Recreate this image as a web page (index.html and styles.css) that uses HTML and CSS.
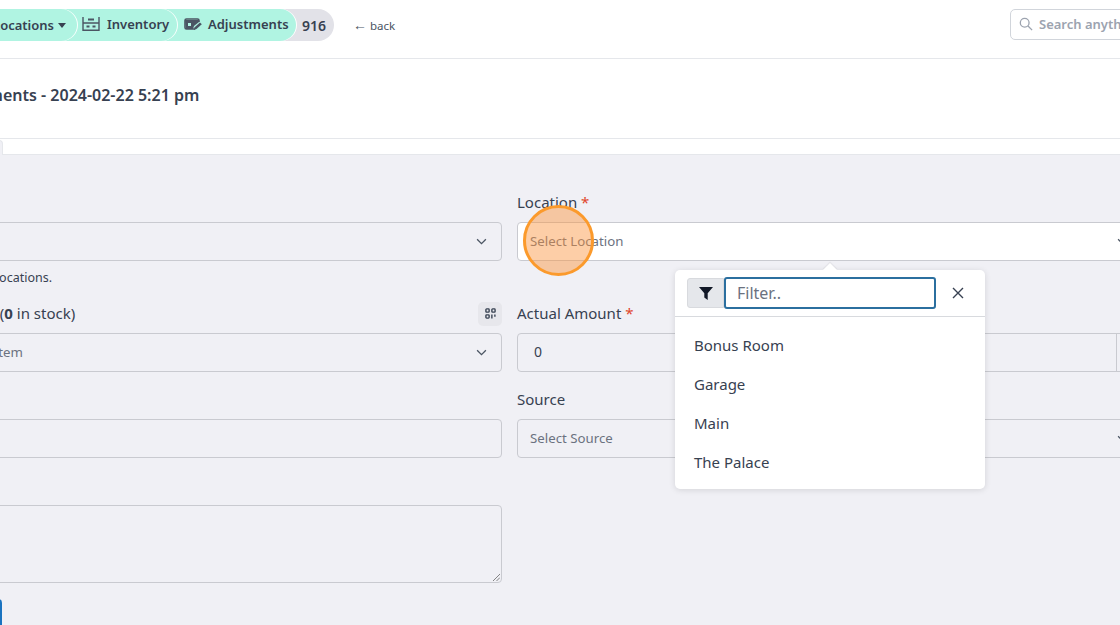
FILE: index.html
```html
<!DOCTYPE html>
<html lang="en">
<head>
    <meta charset="UTF-8">
    <meta name="viewport" content="width=device-width, initial-scale=1.0">
    <title>Inventory Adjustments</title>
    <link rel="stylesheet" href="styles.css">
</head>
<body>
    <div class="topbar">
        <div class="crumbs">
            <div class="pill pill-first">Locations <span class="caret"></span></div>
            <div class="pill pill-mid">
                <svg class="pill-icon" viewBox="0 0 18 14" fill="none" stroke="#4b5563" stroke-width="1.4">
                    <path d="M1 0v13.300h16V0M1 6h16"/>
                    <path d="M6 2.500h6" stroke-width="2"/>
                    <path d="M4.500 9.500h3M10.500 9.500h3" stroke-width="2"/>
                </svg>
                Inventory
            </div>
            <div class="pill pill-last">
                <svg class="pill-icon" viewBox="0 0 18 14" fill="none" stroke="#4b5563" stroke-width="1.6">
                    <path d="M11 12H2.500A1.500 1.500 0 0 1 1 10.500v-7A1.500 1.500 0 0 1 2.500 2h11A1.500 1.500 0 0 1 15 3.500V5"/>
                    <path d="M1 3h14v2l-5 4-1 3H2z" fill="#4b5563" stroke="none"/>
                    <path d="M4 6h3v3H4z" fill="#b0f4e2" stroke="none"/>
                    <path d="M10 13l.7-2.700 5.300-4.800 1.800 1.800-5.300 4.800z" fill="#4b5563" stroke="none"/>
                </svg>
                Adjustments
            </div>
            <div class="pill-count">916</div>
        </div>
        <a class="back"><span class="back-arrow">←</span> back</a>
        <div class="search">
            <svg class="search-icon" viewBox="0 0 16 16" fill="none" stroke="#9ca3af" stroke-width="1.5">
                <circle cx="6.500" cy="6.500" r="5"/>
                <path d="M10.300 10.300l4.700 4.700"/>
            </svg>
            <span>Search anything</span>
        </div>
    </div>

    <div class="title-bar">
        <h1>Inventory Adjustments - 2024-02-22 5:21 pm</h1>
    </div>

    <div class="tabs">
        <div class="tab"></div>
    </div>

    <div class="form">
        <div class="field">
            <label>Type</label>
            <div class="select select-off">Select Type <svg class="chevron" viewBox="0 0 12 8" fill="none" stroke="#4b5563" stroke-width="1.500"><path d="M1 1.500l5 5 5-5"/></svg></div>
            <div class="help">Adjust stock at all locations.</div>
        </div>
        <div class="field">
            <label>Location <span class="req">*</span></label>
            <div class="select select-on">Select Location <svg class="chevron" viewBox="0 0 12 8" fill="none" stroke="#4b5563" stroke-width="1.500"><path d="M1 1.500l5 5 5-5"/></svg></div>

            <div class="click-mark"></div>

            <div class="dropdown">
                <div class="dropdown-head">
                    <div class="filter-addon">
                        <svg class="funnel" viewBox="0 0 14 13"><path d="M0 0h14L8.700 6.300V13L5.300 10.500V6.300z" fill="#111827"/></svg>
                    </div>
                    <div class="filter-input">Filter..</div>
                    <svg class="close" viewBox="0 0 12 12" fill="none" stroke="#374151" stroke-width="1.400"><path d="M1 1l10 10M11 1L1 11"/></svg>
                </div>
                <ul class="options">
                    <li>Bonus Room</li>
                    <li>Garage</li>
                    <li>Main</li>
                    <li>The Palace</li>
                </ul>
            </div>
        </div>

        <div class="field">
            <label class="label-row">
                <span class="stock-label">Inventory Item (<b>0</b> in stock)</span>
                <span class="qr-btn">
                    <svg viewBox="0 0 12 12" fill="none" stroke="#374151" stroke-width="1.500">
                        <rect x="1" y="1" width="3.500" height="3.500" rx="0.800"/>
                        <rect x="7.500" y="1" width="3.500" height="3.500" rx="0.800"/>
                        <rect x="1" y="7.500" width="3.500" height="3.500" rx="0.800"/>
                        <path d="M7.500 7v4.500M10.800 7v2.500"/>
                    </svg>
                </span>
            </label>
            <div class="select select-off select-item">Select Inventory Item <svg class="chevron" viewBox="0 0 12 8" fill="none" stroke="#4b5563" stroke-width="1.500"><path d="M1 1.500l5 5 5-5"/></svg></div>
        </div>
        <div class="field">
            <label>Actual Amount <span class="req">*</span></label>
            <div class="select select-off amount">0<span class="unit"></span></div>
        </div>

        <div class="field">
            <label>Reason</label>
            <div class="select select-off"></div>
        </div>
        <div class="field">
            <label>Source</label>
            <div class="select select-off">Select Source <svg class="chevron" viewBox="0 0 12 8" fill="none" stroke="#4b5563" stroke-width="1.500"><path d="M1 1.500l5 5 5-5"/></svg></div>
        </div>

        <div class="field">
            <label>Notes</label>
            <div class="notes">
                <svg class="grip" viewBox="0 0 8 8" stroke="#555" stroke-width="0.800"><path d="M0 8l8-8M4 8l4-4"/></svg>
            </div>
        </div>
    </div>

    <div class="actions">
        <div class="save">Save</div>
    </div>
</body>
</html>
```
FILE: styles.css
```css
html, body {
    margin: 0;
    height: 625px;
    overflow: hidden;
}
body {
    width: 1120px;
    background-color: #f0f0f5;
    font-family: "Noto Sans", "Open Sans", sans-serif;
    color: #374151;
}

/* top bar */
.topbar {
    background-color: white;
    height: 58px;
    border-bottom: 1px solid #e5e7eb;
    display: flex;
    align-items: flex-start;
    position: relative;
}
.crumbs {
    display: flex;
    align-items: center;
    margin: 9px 0 0 -20px;
    height: 32px;
    font-size: 13px;
    font-weight: 600;
}
.pill {
    height: 32px;
    box-sizing: border-box;
    display: flex;
    align-items: center;
    gap: 7px;
    padding-bottom: 3px;
    background-color: #b0f4e2;
    border-radius: 0 16px 16px 0;
    box-shadow: 1px 0 0 rgba(255, 255, 255, 0.9);
    position: relative;
    white-space: nowrap;
}
.pill-first {
    width: 97px;
    justify-content: flex-end;
    padding-right: 11px;
    padding-bottom: 0;
    gap: 4px;
    z-index: 3;
}
.pill-mid {
    width: 116px;
    margin-left: -16px;
    padding-left: 21px;
    z-index: 2;
}
.pill-last {
    width: 135px;
    margin-left: -16px;
    padding-left: 23px;
    gap: 6px;
    z-index: 1;
}
.pill-icon {
    width: 18px;
    height: 14px;
    flex: none;
}
.caret {
    width: 0;
    height: 0;
    border-left: 4.500px solid transparent;
    border-right: 4.500px solid transparent;
    border-top: 5px solid #374151;
}
.pill-count {
    height: 32px;
    width: 52px;
    margin-left: -14px;
    padding-left: 14px;
    padding-right: 8px;
    box-sizing: border-box;
    background-color: #e2e2e8;
    border-radius: 0 16px 16px 0;
    display: flex;
    align-items: center;
    justify-content: flex-end;
    font-size: 14px;
}
.back {
    margin: 15px 0 0 19px;
    font-size: 11.500px;
    color: #4b5563;
    white-space: nowrap;
}
.back-arrow {
    font-size: 14px;
}
.search {
    position: absolute;
    left: 1010px;
    top: 9px;
    width: 200px;
    height: 31px;
    box-sizing: border-box;
    background-color: white;
    border: 1px solid #d1d5db;
    border-radius: 5px;
    display: flex;
    align-items: center;
    gap: 6px;
    padding: 0 0 1px 8px;
    font-size: 13px;
    font-weight: 600;
    color: #9ca3af;
    white-space: nowrap;
}
.search-icon {
    width: 14px;
    height: 14px;
    flex: none;
}

/* title */
.title-bar {
    background-color: white;
    height: 79px;
    border-bottom: 1px solid #e5e7eb;
    display: flex;
    align-items: center;
    margin-left: -143px;
}
.title-bar h1 {
    margin: 0 0 7px 0;
    font-size: 16px;
    font-weight: 600;
    white-space: nowrap;
}
.tabs {
    background-color: white;
    height: 15px;
    border-bottom: 1px solid #e5e7eb;
    margin-left: -10px;
}
.tab {
    width: 13px;
    height: 15px;
    border-right: 1px solid #e5e7eb;
    border-top: 1px solid #e5e7eb;
    border-radius: 0 4px 0 0;
    box-sizing: border-box;
    position: relative;
    top: 1px;
    background-color: #f0f0f5;
}

/* form */
.form {
    display: grid;
    grid-template-columns: 620px 626px;
    column-gap: 15px;
    margin-left: -118px;
    width: 1261px;
    padding-top: 37px;
    font-size: 14px;
}
.field {
    position: relative;
    padding-bottom: 17px;
}
.field label {
    display: block;
    height: 21px;
    line-height: 21px;
    margin-bottom: 9px;
    font-size: 15px;
    white-space: nowrap;
}
.label-row {
    display: flex !important;
    justify-content: space-between;
    align-items: center;
}
.stock-label {
    margin-left: 9px;
}
.qr-btn {
    width: 24px;
    height: 24px;
    border-radius: 5px;
    background-color: #e7e7ec;
    display: flex;
    align-items: center;
    justify-content: center;
}
.qr-btn svg {
    width: 11px;
    height: 11px;
}
.req {
    color: #e0452a;
}
.select {
    height: 39px;
    box-sizing: border-box;
    border: 1px solid #c9cad0;
    border-radius: 4px;
    display: flex;
    align-items: center;
    padding: 0 12px 2px;
    font-size: 13.250px;
    color: #6b7280;
    position: relative;
    white-space: nowrap;
}
.select-item {
    padding-left: 7px;
}
.select-on {
    background-color: white;
}
.chevron {
    width: 11px;
    height: 7px;
    position: absolute;
    right: 14px;
    top: 15px;
}
.amount {
    font-size: 14px;
    color: #374151;
    padding-left: 16px;
}
.unit {
    position: absolute;
    right: 25px;
    top: 0;
    bottom: 0;
    border-left: 1px solid #c9cad0;
}
.help {
    margin: 8px 0 0 8px;
    height: 17px;
    line-height: 17px;
    font-size: 12.500px;
    white-space: nowrap;
}
.notes {
    height: 78px;
    box-sizing: border-box;
    border: 1px solid #c9cad0;
    border-radius: 4px;
    position: relative;
}
.grip {
    width: 7px;
    height: 7px;
    position: absolute;
    right: 1px;
    bottom: 1px;
}

/* dropdown */
.dropdown {
    position: absolute;
    left: 158px;
    top: 78px;
    width: 310px;
    height: 219px;
    background-color: white;
    border-radius: 5px;
    box-shadow: 0 1px 6px rgba(0, 0, 0, 0.12);
    z-index: 5;
}
.dropdown::before {
    content: "";
    position: absolute;
    left: 150px;
    top: -5px;
    width: 10px;
    height: 10px;
    background-color: white;
    transform: rotate(45deg);
    box-shadow: -1px -1px 1px rgba(0, 0, 0, 0.06);
}
.dropdown-head {
    height: 47px;
    box-sizing: border-box;
    border-bottom: 1px solid #d8dade;
    padding: 8px 12px 0;
    display: flex;
    position: relative;
}
.filter-addon {
    width: 37px;
    height: 30px;
    box-sizing: border-box;
    background-color: #e5e7eb;
    border: 1px solid #d8dade;
    border-radius: 3px 0 0 3px;
    display: flex;
    align-items: center;
    justify-content: center;
}
.funnel {
    width: 14px;
    height: 13px;
}
.filter-input {
    width: 212px;
    height: 32px;
    margin-top: -1px;
    box-sizing: border-box;
    border: 2px solid #2b6f9f;
    border-radius: 3px;
    padding-left: 11px;
    display: flex;
    align-items: center;
    font-size: 16px;
    color: #6b7280;
}
.close {
    width: 12px;
    height: 12px;
    margin: 9px 0 0 16px;
}
.options {
    list-style: none;
    margin: 0;
    padding: 9px 0 0;
    font-size: 15px;
}
.options li {
    height: 39px;
    line-height: 39px;
    padding-left: 19px;
}

/* click marker */
.click-mark {
    position: absolute;
    left: 6px;
    top: 13px;
    width: 71px;
    height: 71px;
    box-sizing: border-box;
    border: 3px solid #fb9a2c;
    border-radius: 50%;
    background-color: rgba(251, 146, 60, 0.45);
    z-index: 6;
}

/* save */
.actions {
    margin: -1px 0 0 -60px;
}
.save {
    width: 62px;
    height: 40px;
    background-color: #1a73c0;
    border-radius: 4px;
    color: white;
    font-size: 14px;
    text-align: center;
    line-height: 40px;
}
```
